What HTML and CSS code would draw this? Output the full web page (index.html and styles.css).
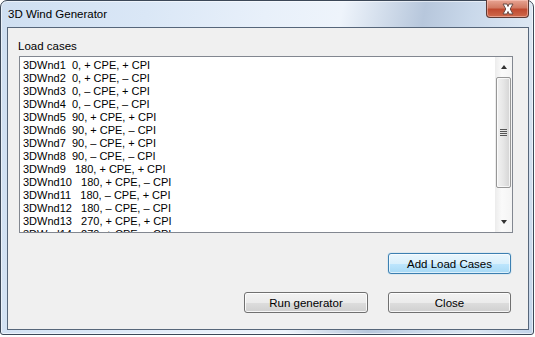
FILE: index.html
```html
<!DOCTYPE html>
<html lang="en">
<head>
    <meta charset="UTF-8">
    <title>3D Wind Generator</title>
    <link rel="stylesheet" href="styles.css">
</head>
<body>

    <div class="window">
        <div class="titlebar">
            <span class="title">3D Wind Generator</span>
            <div class="close-btn">
                <svg width="18" height="12" viewBox="0 0 18 12">
                    <path d="M4 1 L8 1 L9 3.5 L10 1 L14 1 L11.2 6 L14 11 L10 11 L9 8.5 L8 11 L4 11 L6.8 6 Z" fill="#fff" stroke="#6b4a44" stroke-width="1" stroke-linejoin="round"/>
                </svg>
            </div>
        </div>

        <div class="client">
            <div class="group-label">Load cases</div>

            <div class="listbox">
                <ul class="items">
                    <li>3DWnd1  0, + CPE, + CPI</li>
                    <li>3DWnd2  0, + CPE, – CPI</li>
                    <li>3DWnd3  0, – CPE, + CPI</li>
                    <li>3DWnd4  0, – CPE, – CPI</li>
                    <li>3DWnd5  90, + CPE, + CPI</li>
                    <li>3DWnd6  90, + CPE, – CPI</li>
                    <li>3DWnd7  90, – CPE, + CPI</li>
                    <li>3DWnd8  90, – CPE, – CPI</li>
                    <li>3DWnd9   180, + CPE, + CPI</li>
                    <li>3DWnd10   180, + CPE, – CPI</li>
                    <li>3DWnd11   180, – CPE, + CPI</li>
                    <li>3DWnd12   180, – CPE, – CPI</li>
                    <li>3DWnd13   270, + CPE, + CPI</li>
                    <li>3DWnd14   270, + CPE, – CPI</li>
                </ul>
                <div class="scrollbar">
                    <div class="arrow-btn"><span class="tri tri-up"></span></div>
                    <div class="track">
                        <div class="thumb">
                            <div class="grip"><i></i><i></i><i></i><i></i></div>
                        </div>
                    </div>
                    <div class="arrow-btn"><span class="tri tri-down"></span></div>
                </div>
            </div>

            <div class="button-row">
                <button class="btn btn-focus">Add Load Cases</button>
            </div>
            <div class="button-row bottom-row">
                <button class="btn btn-run">Run generator</button>
                <button class="btn">Close</button>
            </div>
        </div>
    </div>

</body>
</html>
```

FILE: styles.css
```css
* {
    box-sizing: border-box;
    margin: 0;
    padding: 0;
}
body {
    background: #fff;
    font-family: 'Liberation Sans', Arial, sans-serif;
    font-size: 11px;
    color: #000;
}
.window {
    width: 534px;
    height: 335px;
    border: 1px solid #3c4858;
    border-radius: 7px 7px 3px 3px;
    background: linear-gradient(100deg, #cfdff1 0%, #dae7f6 25%, #e8f0fa 45%, #eef4fb 58%, #b7c7dc 72%, #c9d8ea 80%, #dce7f3 90%, #c2d4ea 100%);
    box-shadow: inset 0 0 0 1px rgba(255, 255, 255, 0.55);
    display: flex;
    flex-direction: column;
}
.titlebar {
    height: 26px;
    display: flex;
    justify-content: space-between;
    align-items: flex-start;
    padding-left: 7px;
}
.title {
    font-size: 11.5px;
    line-height: 14px;
    margin-top: 6px;
    color: #000;
}
.close-btn {
    width: 43px;
    height: 18px;
    margin-top: -1px;
    margin-right: 4px;
    border: 1px solid #5d3a34;
    border-top: none;
    border-radius: 0 0 4px 4px;
    background: linear-gradient(#e7a493 0%, #d27a63 45%, #c04a30 55%, #cf6a4c 100%);
    box-shadow: inset 0 0 0 1px rgba(255, 210, 200, 0.5);
    display: flex;
    justify-content: center;
    align-items: center;
}
.client {
    flex: 1;
    margin: 0 4px 4px 6px;
    background: #f0f0f0;
    border: 1px solid #56667a;
    padding: 11px 0 0 10px;
    display: flex;
    flex-direction: column;
}
.group-label {
    font-size: 11.5px;
    line-height: 14px;
    height: 17px;
}
.listbox {
    width: 494px;
    height: 177px;
    margin-left: 1px;
    border: 1px solid #828790;
    background: #fff;
    display: flex;
    overflow: hidden;
}
.items {
    flex: 1;
    list-style: none;
    padding: 2px 0 0 3px;
    overflow: hidden;
}
.items li {
    white-space: pre;
    line-height: 13px;
    height: 13px;
}
.scrollbar {
    width: 17px;
    display: flex;
    flex-direction: column;
    background: linear-gradient(90deg, #ececec, #fafafa 40%, #f4f4f4);
}
.arrow-btn {
    height: 20px;
    display: flex;
    justify-content: center;
    align-items: center;
}
.tri {
    width: 0;
    height: 0;
    border-left: 3.5px solid transparent;
    border-right: 3.5px solid transparent;
}
.tri-up {
    border-bottom: 4px solid #333;
}
.tri-down {
    border-top: 4px solid #333;
}
.track {
    flex: 1;
    padding: 0 1px;
}
.thumb {
    height: 111px;
    border: 1px solid #979797;
    border-radius: 2px;
    background: linear-gradient(90deg, #f2f2f2 0%, #e6e6e6 50%, #d4d4d4 100%);
    box-shadow: inset 0 0 0 1px rgba(255, 255, 255, 0.7);
    display: flex;
    justify-content: center;
    align-items: center;
}
.grip {
    display: flex;
    flex-direction: column;
    gap: 1px;
}
.grip i {
    display: block;
    width: 7px;
    height: 1px;
    background: #555;
}
.button-row {
    display: flex;
    justify-content: flex-end;
    gap: 20px;
    padding-right: 17px;
    margin-top: 20px;
}
.bottom-row {
    margin-top: 18px;
}
.btn {
    width: 123px;
    height: 21px;
    font-family: 'Liberation Sans', Arial, sans-serif;
    font-size: 11.5px;
    color: #000;
    border: 1px solid #707070;
    border-radius: 3px;
    background: linear-gradient(#f2f2f2 0%, #ebebeb 50%, #dddddd 51%, #cfcfcf 100%);
    box-shadow: inset 0 0 0 1px rgba(255, 255, 255, 0.8);
}
.btn-run {
    width: 124px;
}
.btn-focus {
    border-color: #3c7fb1;
    background: linear-gradient(#eaf6fd 0%, #d9f0fc 50%, #bee6fd 51%, #a7d9f5 100%);
    box-shadow: inset 0 0 0 1px rgba(255, 255, 255, 0.6), 0 0 1px #48a8e0;
}
```
